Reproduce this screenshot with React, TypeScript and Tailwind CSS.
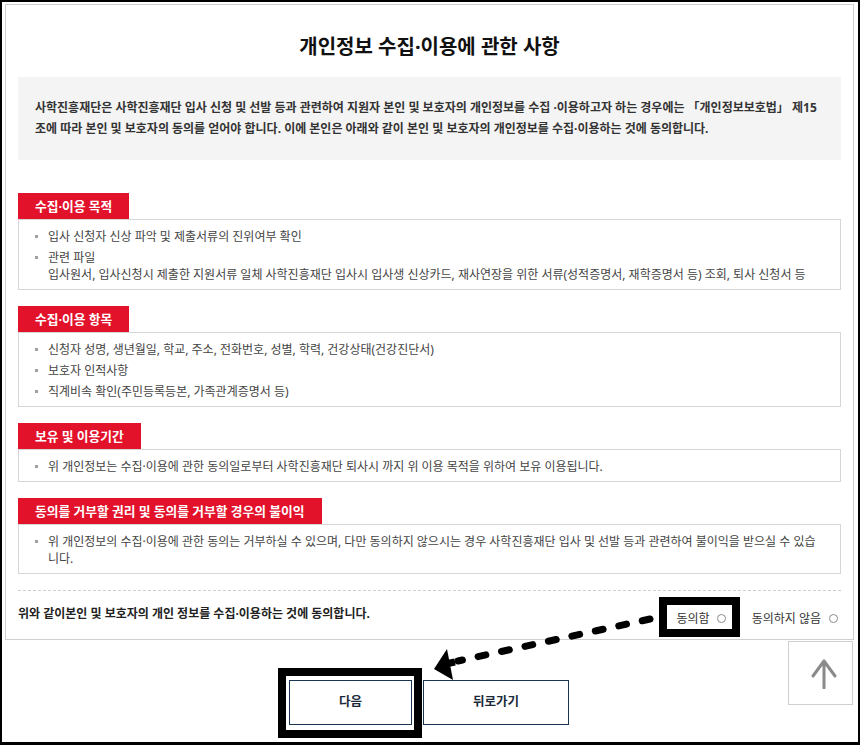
const sections = [
  {
    title: "수집·이용 목적",
    items: [
      ["입사 신청자 신상 파악 및 제출서류의 진위여부 확인"],
      [
        "관련 파일",
        "입사원서, 입사신청시 제출한 지원서류 일체 사학진흥재단 입사시 입사생 신상카드, 재사연장을 위한 서류(성적증명서, 재학증명서 등) 조회, 퇴사 신청서 등",
      ],
    ],
  },
  {
    title: "수집·이용 항목",
    items: [
      ["신청자 성명, 생년월일, 학교, 주소, 전화번호, 성별, 학력, 건강상태(건강진단서)"],
      ["보호자 인적사항"],
      ["직계비속 확인(주민등록등본, 가족관계증명서 등)"],
    ],
  },
  {
    title: "보유 및 이용기간",
    items: [
      ["위 개인정보는 수집·이용에 관한 동의일로부터 사학진흥재단 퇴사시 까지 위 이용 목적을 위하여 보유 이용됩니다."],
    ],
  },
  {
    title: "동의를 거부할 권리 및 동의를 거부할 경우의 불이익",
    items: [
      [
        "위 개인정보의 수집·이용에 관한 동의는 거부하실 수 있으며, 다만 동의하지 않으시는 경우 사학진흥재단 입사 및 선발 등과 관련하여 불이익을 받으실 수 있습",
        "니다.",
      ],
    ],
  },
];

const Radio = () => (
  <span className="inline-block w-[9px] h-[9px] rounded-full border border-[#8a8a8a] bg-white" />
);

export default function App() {
  return (
    <div className="relative w-[860px] h-[745px] bg-white overflow-hidden font-['Noto_Sans','Noto_Sans_CJK_KR',sans-serif]">
      <div className="h-full border-2 border-b-[3px] border-black">
        {/* main panel */}
        <div className="ml-[3px] mt-[2px] w-[849px] h-[636px] border border-[#cfcfcf] px-[12px]">
          <h1 className="pt-[30px] text-center text-[20px] leading-[24px] font-bold text-[#111]">
            개인정보 수집·이용에 관한 사항
          </h1>

          <div className="mt-[18px] bg-[#f4f4f4] px-[17px] pt-[20px] pb-[21px] text-[12px] leading-[21px] font-bold text-[#333]">
            <p className="whitespace-nowrap">
              사학진흥재단은 사학진흥재단 입사 신청 및 선발 등과 관련하여 지원자 본인 및 보호자의 개인정보를 수집 ·이용하고자 하는 경우에는 「개인정보보호법」 제15
            </p>
            <p className="whitespace-nowrap">
              조에 따라 본인 및 보호자의 동의를 얻어야 합니다. 이에 본인은 아래와 같이 본인 및 보호자의 개인정보를 수집·이용하는 것에 동의합니다.
            </p>
          </div>

          <div className="mt-[33px] flex flex-col gap-[16px]">
            {sections.map((section, index) => (
              <div key={index}>
                <div className="w-fit bg-[#e3122b] px-[17px] text-[12.75px] leading-[26px] font-bold text-white whitespace-nowrap">
                  {section.title}
                </div>
                <ul className="border border-[#d6d6d6] pl-[16px] pr-[10px] pt-[8px] pb-[6px] flex flex-col gap-[4px] text-[12px] leading-[17px] text-[#444]">
                  {section.items.map((lines, i) => (
                    <li key={i} className="flex">
                      <span className="mt-[7px] mr-[10px] w-[3px] h-[3px] shrink-0 bg-[#a0a0a0]" />
                      <div>
                        {lines.map((line, j) => (
                          <p key={j} className="whitespace-nowrap">
                            {line}
                          </p>
                        ))}
                      </div>
                    </li>
                  ))}
                </ul>
              </div>
            ))}
          </div>

          <div className="mt-[16px] border-t border-dashed border-[#d0d0d0] pt-[14px] flex justify-between items-start">
            <p className="text-[12px] leading-[17px] font-bold text-[#222] whitespace-nowrap">
              위와 같이본인 및 보호자의 개인 정보를 수집·이용하는 것에 동의합니다.
            </p>
            <div className="mt-[5px] mr-[3px] flex items-center text-[12px] leading-[17px] text-[#333]">
              <span>동의함</span>
              <span className="ml-[7px] flex"><Radio /></span>
              <span className="ml-[26px]">동의하지 않음</span>
              <span className="ml-[8px] flex"><Radio /></span>
            </div>
          </div>
        </div>

        {/* buttons */}
        <div className="mt-[40px] pl-[287px] flex gap-[11px]">
          <button className="w-[123px] h-[45px] border border-[#1b3555] bg-white text-[12.5px] font-bold text-[#1b2a3a]">
            다음
          </button>
          <button className="w-[146px] h-[45px] border border-[#1b3555] bg-white text-[12.5px] font-bold text-[#1b2a3a]">
            뒤로가기
          </button>
        </div>
      </div>

      {/* floating top button */}
      <div className="absolute left-[788px] top-[641px] w-[65px] h-[64px] border border-[#cfcfcf] bg-white">
        <svg className="absolute left-[22px] top-[17px]" width="26" height="30" viewBox="0 0 26 30" fill="none">
          <path d="M13 2V29M13 2L2 17M13 2L24 17" stroke="#8a8a8a" strokeWidth="3" strokeLinecap="round" strokeLinejoin="round" />
        </svg>
      </div>

      {/* annotation highlights */}
      <div className="absolute left-[659px] top-[597px] w-[81px] h-[40px] border-[8px] border-black" />
      <div className="absolute left-[278px] top-[668px] w-[144px] h-[70px] border-[8px] border-black" />

      {/* dashed annotation arrow */}
      <svg className="absolute inset-0 pointer-events-none" width="860" height="745" viewBox="0 0 860 745">
        <line x1="650" y1="619" x2="458" y2="661" stroke="#000" strokeWidth="7" strokeLinecap="round" strokeDasharray="8 16" />
        <polygon points="434,669 447,649 453,680" fill="#000" />
        <line x1="455" y1="662" x2="445" y2="664" stroke="#000" strokeWidth="7" />
      </svg>
    </div>
  );
}
